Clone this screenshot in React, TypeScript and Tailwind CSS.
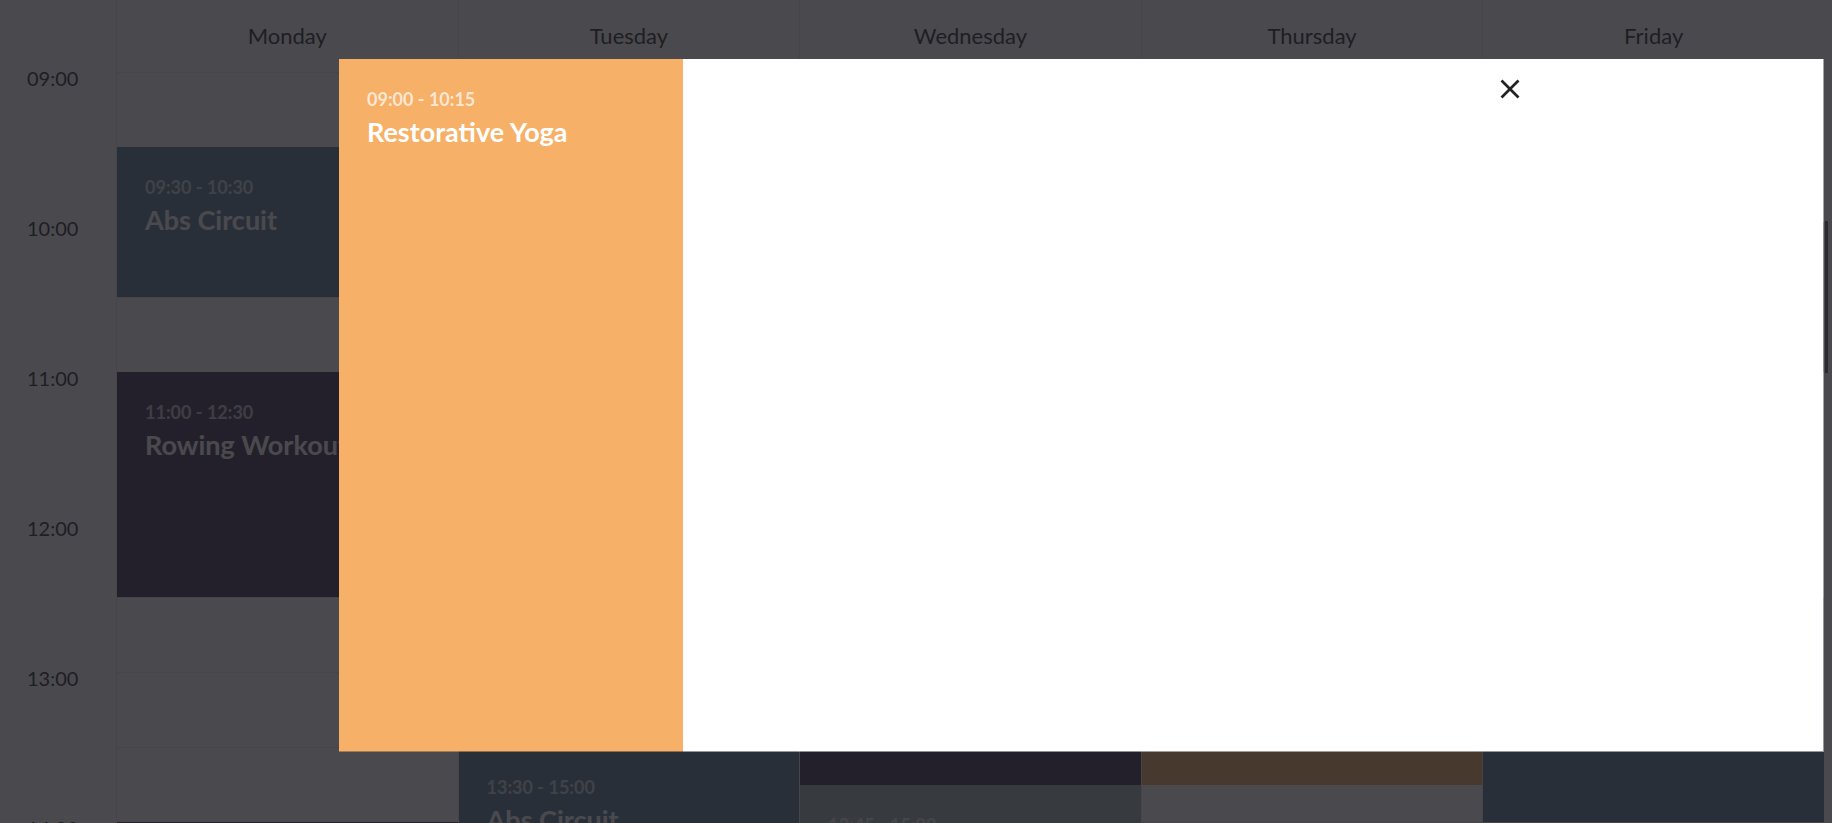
type Ev = { start: string; end: string; name: string; color: string };

const BLUE = 'bg-[#577f92]';
const PURPLE = 'bg-[#443453]';
const ORANGE = 'bg-[#f6b067]';
const TEAL = 'bg-[#a2b9b2]';

const days: { day: string; events: Ev[] }[] = [
  {
    day: 'Monday',
    events: [
      { start: '09:30', end: '10:30', name: 'Abs Circuit', color: BLUE },
      { start: '11:00', end: '12:30', name: 'Rowing Workout', color: PURPLE },
      { start: '14:00', end: '15:15', name: 'Rowing Workout', color: PURPLE },
    ],
  },
  {
    day: 'Tuesday',
    events: [
      { start: '10:00', end: '11:00', name: 'Restorative Yoga', color: ORANGE },
      { start: '11:30', end: '13:00', name: 'Rowing Workout', color: PURPLE },
      { start: '13:30', end: '15:00', name: 'Abs Circuit', color: BLUE },
    ],
  },
  {
    day: 'Wednesday',
    events: [
      { start: '09:00', end: '10:15', name: 'Restorative Yoga', color: ORANGE },
      { start: '10:45', end: '11:45', name: 'Abs Circuit', color: BLUE },
      { start: '12:00', end: '13:45', name: 'Rowing Workout', color: PURPLE },
      { start: '13:45', end: '15:00', name: 'Yoga Level 1', color: TEAL },
    ],
  },
  {
    day: 'Thursday',
    events: [
      { start: '09:30', end: '10:30', name: 'Abs Circuit', color: BLUE },
      { start: '12:00', end: '13:45', name: 'Restorative Yoga', color: ORANGE },
    ],
  },
  {
    day: 'Friday',
    events: [
      { start: '10:00', end: '11:00', name: 'Rowing Workout', color: PURPLE },
      { start: '12:30', end: '14:00', name: 'Abs Circuit', color: BLUE },
    ],
  },
];

const hours = ['09:00', '10:00', '11:00', '12:00', '13:00', '14:00', '15:00'];
const HOUR = 150;

function toPx(t: string) {
  const [h, m] = t.split(':').map(Number);
  return (h - 9 + m / 60) * HOUR;
}

function EventContent({ start, end, name }: { start: string; end: string; name: string }) {
  return (
    <div className="pl-[28px] pt-[29px] text-white">
      <div className="text-[18px] leading-[22px] font-bold opacity-70">
        {start} - {end}
      </div>
      <div className="mt-[6px] text-[27px] leading-[32px] font-bold whitespace-nowrap">{name}</div>
    </div>
  );
}

export default function App() {
  return (
    <div className="relative flex h-screen overflow-hidden bg-white font-['Lato',sans-serif] text-[#2a2a2a]">
      <div className="flex flex-1">
        {/* Timeline */}
        <div className="w-[116px] shrink-0">
          <div className="h-[72px]" />
          {hours.map((h) => (
            <div key={h} className="h-[150px] pl-[27px]">
              <span className="block -translate-y-[4px] text-[20px] leading-[20px]">{h}</span>
            </div>
          ))}
        </div>

        {/* Day columns */}
        {days.map((d) => (
          <div key={d.day} className="flex-1 border-l border-[#eaeaea]">
            <div className="flex h-[72px] items-center justify-center pb-[2px] text-[22px]">{d.day}</div>
            <div className="relative">
              {Array.from({ length: 14 }).map((_, i) => (
                <div key={i} className="h-[75px] border-t border-[#eaeaea]" />
              ))}
              {d.events.map((e) => (
                <div
                  key={e.start}
                  className={`absolute left-0 right-0 ${e.color}`}
                  style={{ top: toPx(e.start), height: toPx(e.end) - toPx(e.start) }}
                >
                  <EventContent start={e.start} end={e.end} name={e.name} />
                </div>
              ))}
            </div>
          </div>
        ))}
      </div>

      {/* Scrollbar */}
      <div className="flex w-2 shrink-0 flex-col bg-white">
        <div className="h-[221px]" />
        <div className="ml-[1px] h-[152px] w-[3px] bg-[#66666e]" />
      </div>

      {/* Cover layer */}
      <div className="absolute inset-0 bg-[#1d1c22]/80" />

      {/* Event modal */}
      <div className="absolute left-[339px] top-[59px] flex h-[693px] w-[1485px]">
        <div className="w-[344px] shrink-0 border-b border-[#f6b067]/50 bg-[#f6b067] bg-clip-padding">
          <EventContent start="09:00" end="10:15" name="Restorative Yoga" />
        </div>
        <div className="relative flex-1 border-b border-r border-white/50 bg-white bg-clip-padding">
          <button className="absolute left-[817px] top-[20px] flex h-[20px] w-[20px] items-center justify-center">
            <svg width="20" height="20" viewBox="0 0 20 20" fill="none" stroke="#222" strokeWidth="2.6">
              <line x1="1.5" y1="1.5" x2="18.5" y2="18.5" />
              <line x1="18.5" y1="1.5" x2="1.5" y2="18.5" />
            </svg>
          </button>
        </div>
      </div>
    </div>
  );
}
